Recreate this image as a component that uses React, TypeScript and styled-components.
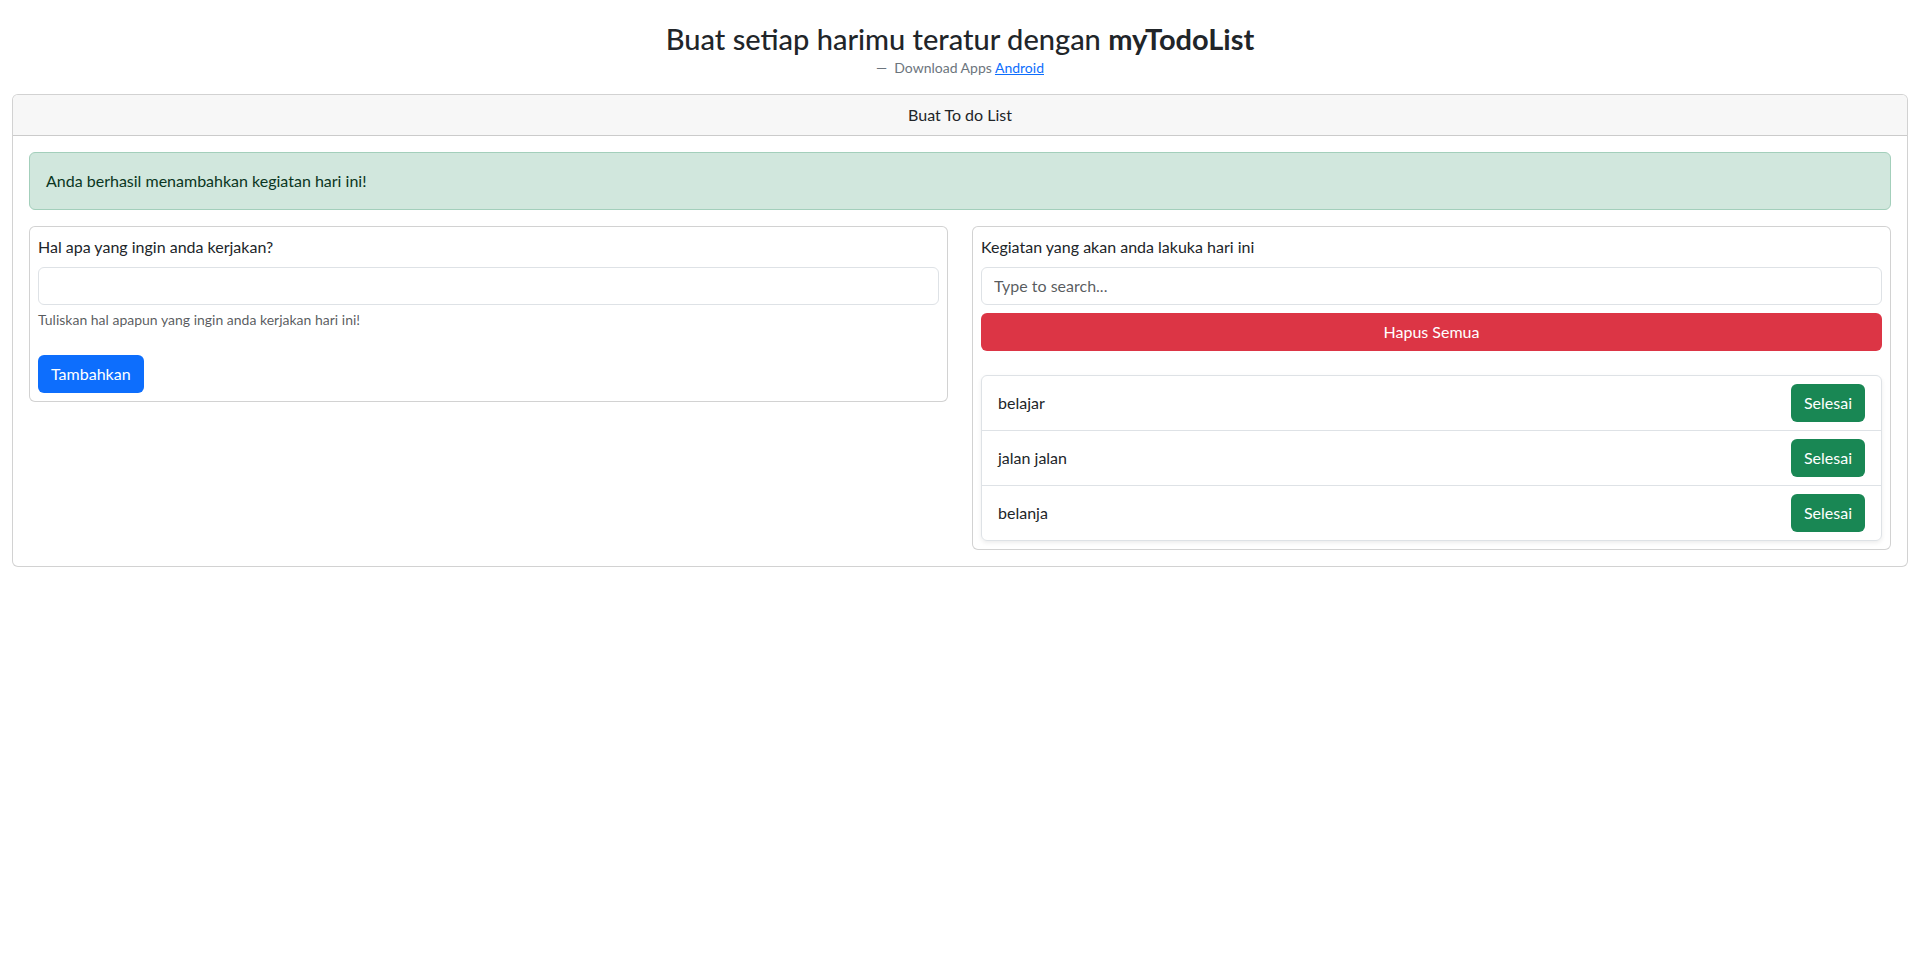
import React from "react";
import styled, { createGlobalStyle } from "styled-components";

const Global = createGlobalStyle`
  * { box-sizing: border-box; }
  html, body { margin: 0; padding: 0; background: #fff; }
  body {
    font-family: "Segoe UI", Lato, "Noto Sans", sans-serif;
    font-size: 16px;
    line-height: 1.5;
    color: #212529;
  }
`;

const Page = styled.div`
  padding: 22px 12px 0;
`;

const Hero = styled.figure`
  margin: 0 0 16px;
  text-align: center;
`;

const Title = styled.h3`
  margin: 0;
  font-size: 29px;
  font-weight: 500;
  line-height: 1.2;
  b { font-weight: 700; }
`;

const Caption = styled.figcaption`
  font-size: 14px;
  line-height: 1.5;
  color: #6c757d;
  &::before { content: "\\2014\\00A0\\00A0"; }
  a { color: #0d6efd; text-decoration: underline; }
`;

const Card = styled.div`
  border: 1px solid rgba(0, 0, 0, 0.175);
  border-radius: 6px;
  background: #fff;
`;

const CardHeader = styled.div`
  padding: 8px 16px;
  background: #f7f7f7;
  border-bottom: 1px solid rgba(0, 0, 0, 0.175);
  border-radius: 5px 5px 0 0;
  text-align: center;
`;

const CardBody = styled.div<{ $pad: number }>`
  padding: ${(p) => p.$pad}px;
`;

const Alert = styled.div`
  padding: 16px;
  margin-bottom: 16px;
  background: #d1e7dd;
  border: 1px solid #a3cfbb;
  color: #0a3622;
  border-radius: 6px;
`;

const Columns = styled.div`
  display: grid;
  grid-template-columns: 1fr 1fr;
  gap: 24px;
  align-items: start;
`;

const Label = styled.label`
  display: block;
  margin-bottom: 8px;
`;

const Input = styled.input`
  display: block;
  width: 100%;
  height: 38px;
  padding: 6px 12px;
  font: inherit;
  color: #212529;
  border: 1px solid #dee2e6;
  border-radius: 6px;
  background: #fff;
  &::placeholder { color: rgba(33, 37, 41, 0.75); }
`;

const Help = styled.div`
  margin-top: 4px;
  font-size: 14px;
  color: rgba(33, 37, 41, 0.75);
`;

const Button = styled.button<{ $variant: "primary" | "danger" | "success"; $block?: boolean }>`
  display: ${(p) => (p.$block ? "block" : "inline-block")};
  width: ${(p) => (p.$block ? "100%" : "auto")};
  height: 38px;
  padding: 6px 12px;
  font: inherit;
  color: #fff;
  border: 1px solid transparent;
  border-radius: 6px;
  background: ${(p) =>
    p.$variant === "primary" ? "#0d6efd" : p.$variant === "danger" ? "#dc3545" : "#198754"};
  cursor: pointer;
`;

const AddRow = styled.div`
  margin-top: 25px;
`;

const DangerWrap = styled.div`
  margin-top: 8px;
  margin-bottom: 24px;
`;

const List = styled.ul`
  list-style: none;
  margin: 0;
  padding: 0;
  border: 1px solid #dee2e6;
  border-radius: 6px;
  box-shadow: 0 2px 4px rgba(0, 0, 0, 0.075);
`;

const Item = styled.li`
  display: flex;
  align-items: center;
  justify-content: space-between;
  padding: 8px 16px;
  & + & { border-top: 1px solid #dee2e6; }
`;

const todos = ["belajar", "jalan jalan", "belanja"];

export default function App() {
  return (
    <>
      <Global />
      <Page>
        <Hero>
          <Title>
            Buat setiap harimu teratur dengan <b>myTodoList</b>
          </Title>
          <Caption>
            Download Apps <a href="#">Android</a>
          </Caption>
        </Hero>
        <Card>
          <CardHeader>Buat To do List</CardHeader>
          <CardBody $pad={16}>
            <Alert>Anda berhasil menambahkan kegiatan hari ini!</Alert>
            <Columns>
              <Card>
                <CardBody $pad={8}>
                  <Label>Hal apa yang ingin anda kerjakan?</Label>
                  <Input type="text" />
                  <Help>Tuliskan hal apapun yang ingin anda kerjakan hari ini!</Help>
                  <AddRow>
                    <Button $variant="primary">Tambahkan</Button>
                  </AddRow>
                </CardBody>
              </Card>
              <Card>
                <CardBody $pad={8}>
                  <Label>Kegiatan yang akan anda lakuka hari ini</Label>
                  <Input type="text" placeholder="Type to search..." />
                  <DangerWrap>
                    <Button $variant="danger" $block>
                      Hapus Semua
                    </Button>
                  </DangerWrap>
                  <List>
                    {todos.map((t) => (
                      <Item key={t}>
                        <span>{t}</span>
                        <Button $variant="success">Selesai</Button>
                      </Item>
                    ))}
                  </List>
                </CardBody>
              </Card>
            </Columns>
          </CardBody>
        </Card>
      </Page>
    </>
  );
}
